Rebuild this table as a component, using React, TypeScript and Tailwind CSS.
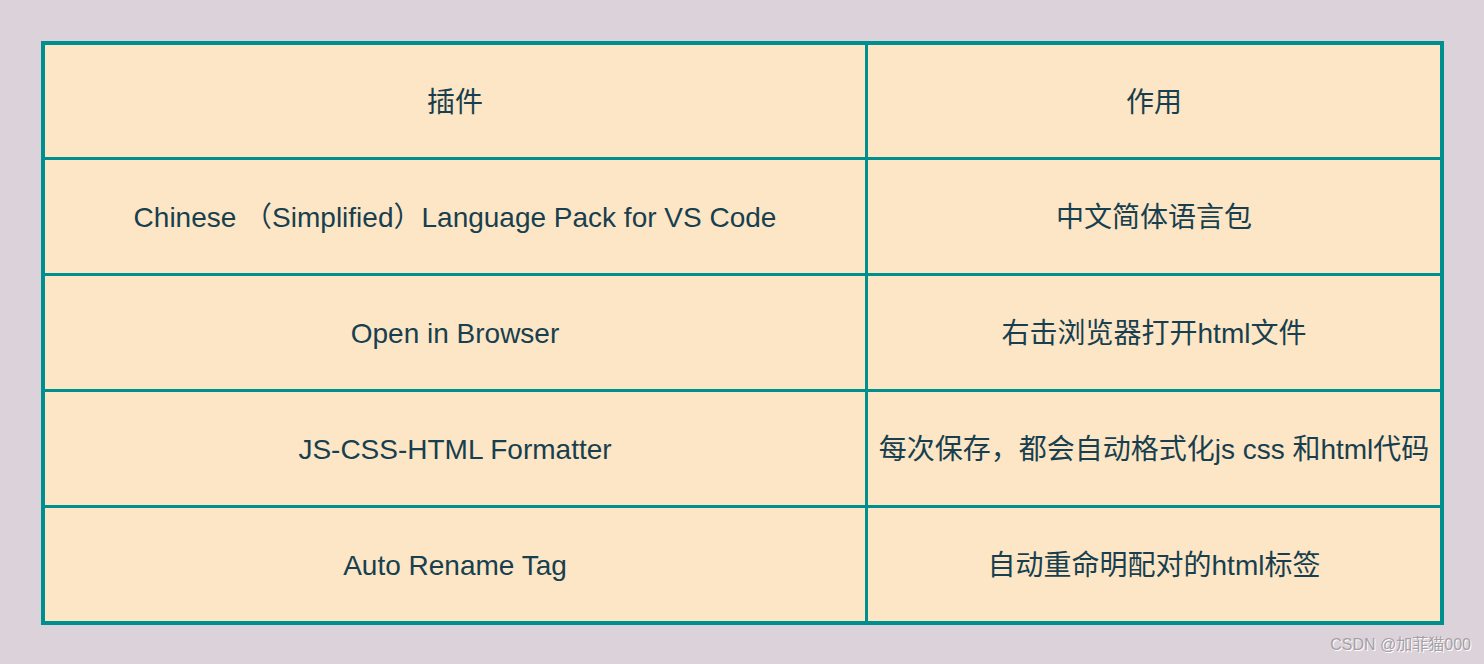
import React from "react";

const rows: [string, string][] = [
  ["插件", "作用"],
  ["Chinese （Simplified）Language Pack for VS Code", "中文简体语言包"],
  ["Open in Browser", "右击浏览器打开html文件"],
  ["JS-CSS-HTML Formatter", "每次保存，都会自动格式化js css 和html代码"],
  ["Auto Rename Tag", "自动重命明配对的html标签"],
];

export default function App() {
  return (
    <div
      className="relative w-[1484px] h-[664px] bg-[#dcd2da] pt-[41px] pl-[41px] overflow-hidden"
      style={{ fontFamily: '"Liberation Sans", "Noto Sans CJK SC", sans-serif' }}
    >
      <div className="w-[1403px] border-4 border-[#008f8f] bg-[#008f8f] grid grid-cols-[820px_572px] grid-rows-[112px_113px_113px_113px_113px] gap-[3px]">
        {rows.map(([a, b], i) => (
          <React.Fragment key={i}>
            <div className="bg-[#fde6c5] flex items-center justify-center pt-[3px] text-[28px] text-[#173f4f] whitespace-nowrap">
              {a}
            </div>
            <div className="bg-[#fde6c5] flex items-center justify-center pt-[3px] text-[28px] text-[#173f4f] whitespace-nowrap">
              {b}
            </div>
          </React.Fragment>
        ))}
      </div>
      <div className="absolute right-[13px] bottom-[7px] text-[16px] text-[#a4a0a4] [text-shadow:1px_1px_0_#ffffff]">
        CSDN @加菲猫000
      </div>
    </div>
  );
}
